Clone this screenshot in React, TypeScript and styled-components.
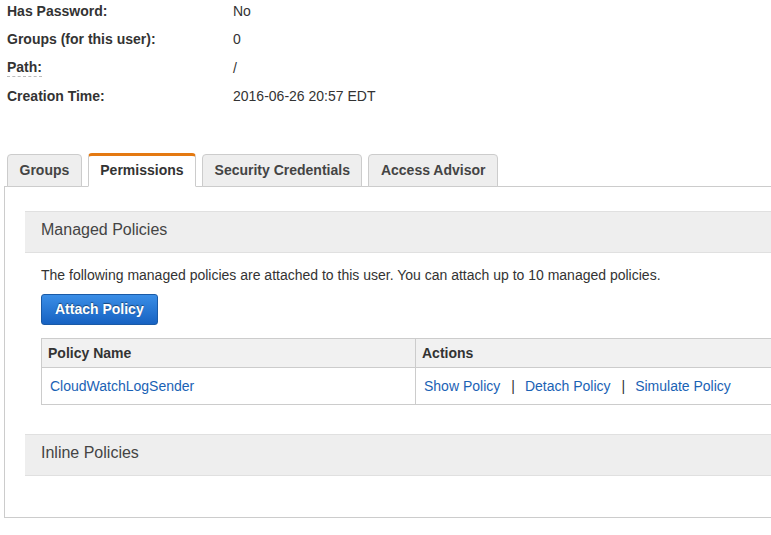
import styled, { createGlobalStyle } from 'styled-components'

const GlobalStyle = createGlobalStyle`
  body {
    margin: 0;
    background: #fff;
    font-family: "Liberation Sans", Arial, Helvetica, sans-serif;
    color: #333;
    overflow: hidden;
  }
`

const Page = styled.div`
  width: 771px;
  height: 535px;
  overflow: hidden;
`

const InfoList = styled.dl`
  margin: 0;
  padding: 1px 0 0 7px;
`

const InfoRow = styled.div`
  display: grid;
  grid-template-columns: 226px 1fr;
  height: 20px;
  align-items: center;
  margin-bottom: 8.3px;
  font-size: 14px;
`

const Label = styled.dt`
  font-weight: bold;
  color: #333;
`

const Value = styled.dd`
  margin: 0;
  color: #333;
`

const Dotted = styled.span`
  display: inline-block;
  line-height: 17px;
  border-bottom: 1px dashed #bbb;
`

const TabArea = styled.div`
  margin: 47px 0 0 4px;
`

const TabList = styled.ul`
  display: flex;
  align-items: flex-end;
  gap: 6px;
  list-style: none;
  margin: 0;
  padding: 0 0 0 3px;
  position: relative;
  z-index: 1;
`

const Tab = styled.li<{ $active?: boolean }>`
  height: ${p => (p.$active ? '30px' : '31px')};
  line-height: ${p => (p.$active ? '29px' : '31px')};
  padding: 0 11.5px;
  margin-bottom: -1px;
  font-size: 14px;
  font-weight: bold;
  color: ${p => (p.$active ? '#333' : '#444')};
  background: ${p => (p.$active ? '#fff' : '#eeeeee')};
  border: 1px solid #ccc;
  border-top: ${p => (p.$active ? '3px solid #e47911' : '1px solid #ccc')};
  border-bottom: 1px solid ${p => (p.$active ? '#fff' : '#ccc')};
  border-radius: 4px 4px 0 0;
`

const Panel = styled.div`
  width: 840px;
  border: 1px solid #ccc;
  padding: 24px 20px 41px 20px;
`

const SectionHead = styled.div`
  height: 40px;
  line-height: 36px;
  padding-left: 16px;
  font-size: 16px;
  color: #444;
  background: #eeeeee;
  border-top: 1px solid #e0e0e0;
  border-bottom: 1px solid #e0e0e0;
`

const SectionBody = styled.div`
  padding: 12px 16px 29px;
`

const Desc = styled.p`
  margin: 0;
  font-size: 14px;
  line-height: 20px;
  color: #333;
`

const Button = styled.button`
  display: block;
  margin-top: 9px;
  height: 31px;
  padding: 0 13px;
  font-family: inherit;
  font-size: 14px;
  font-weight: bold;
  color: #fff;
  text-shadow: 0 -1px 1px rgba(0, 0, 0, 0.45);
  background: linear-gradient(#3a8ee6, #1762c2);
  border: 1px solid #1a5aa6;
  border-radius: 3px;
`

const Table = styled.table`
  margin-top: 13px;
  width: 790px;
  border-collapse: collapse;
  font-size: 14px;
`

const Th = styled.th`
  height: 28px;
  padding: 0 6px;
  text-align: left;
  font-weight: bold;
  color: #333;
  background: #f1f1f1;
  border: 1px solid #ccc;
`

const Td = styled.td`
  height: 36px;
  padding: 0 8px;
  border: 1px solid #ccc;
`

const Link = styled.a`
  color: #1a62b5;
  text-decoration: none;
`

const Sep = styled.span`
  margin: 0 10px 0 11px;
  color: #333;
`

const App = () => {
  return (
    <Page>
      <GlobalStyle />
      <InfoList>
        <InfoRow>
          <Label>Has Password:</Label>
          <Value>No</Value>
        </InfoRow>
        <InfoRow>
          <Label>Groups (for this user):</Label>
          <Value>0</Value>
        </InfoRow>
        <InfoRow>
          <Label>
            <Dotted>Path:</Dotted>
          </Label>
          <Value>/</Value>
        </InfoRow>
        <InfoRow>
          <Label>Creation Time:</Label>
          <Value>2016-06-26 20:57 EDT</Value>
        </InfoRow>
      </InfoList>

      <TabArea>
        <TabList>
          <Tab>Groups</Tab>
          <Tab $active>Permissions</Tab>
          <Tab>Security Credentials</Tab>
          <Tab>Access Advisor</Tab>
        </TabList>
        <Panel>
          <SectionHead>Managed Policies</SectionHead>
          <SectionBody>
            <Desc>
              The following managed policies are attached to this user. You can attach up to 10 managed policies.
            </Desc>
            <Button>Attach Policy</Button>
            <Table>
              <thead>
                <tr>
                  <Th style={{ width: '361px' }}>Policy Name</Th>
                  <Th>Actions</Th>
                </tr>
              </thead>
              <tbody>
                <tr>
                  <Td>
                    <Link href="#">CloudWatchLogSender</Link>
                  </Td>
                  <Td>
                    <Link href="#">Show Policy</Link>
                    <Sep>|</Sep>
                    <Link href="#">Detach Policy</Link>
                    <Sep>|</Sep>
                    <Link href="#">Simulate Policy</Link>
                  </Td>
                </tr>
              </tbody>
            </Table>
          </SectionBody>
          <SectionHead>Inline Policies</SectionHead>
        </Panel>
      </TabArea>
    </Page>
  )
}

export default App
